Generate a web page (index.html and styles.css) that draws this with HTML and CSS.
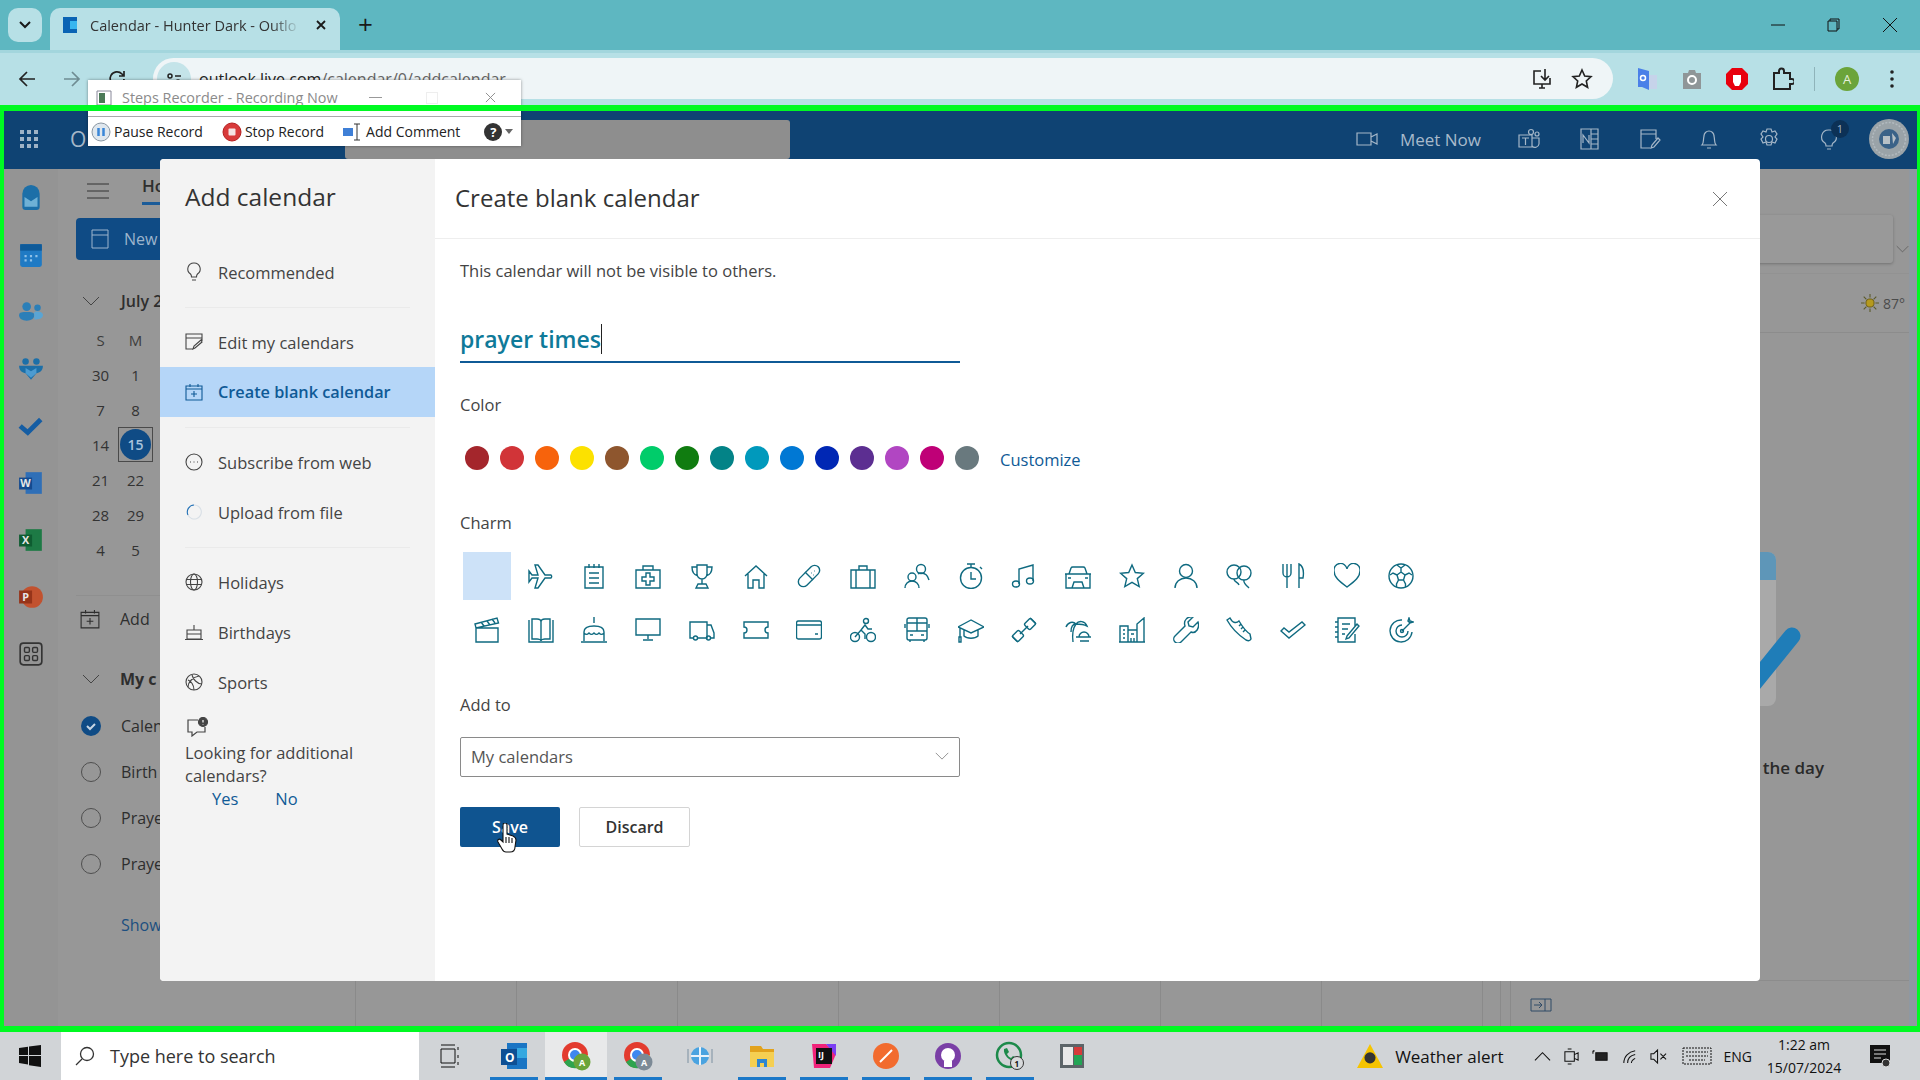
FILE: index.html
```html
<!DOCTYPE html>
<html lang="en">
<head>
    <meta charset="UTF-8">
    <title>Calendar - Hunter Dark - Outlook</title>
    <link rel="stylesheet" href="styles.css">
</head>
<body>

<!-- icon sprite -->
<svg class="sprite" xmlns="http://www.w3.org/2000/svg">
    <symbol id="c-plane" viewBox="0 0 26 26"><path d="M1 8l3 4h6L7 2h3l7 10h6a2 2 0 010 3h-6L10 25H7l3-10H4l-3 4z"/></symbol>
    <symbol id="c-notepad" viewBox="0 0 26 26"><path d="M4 4h18v21H4zM8 1v4M13 1v4M18 1v4M8 10h10M8 15h10M8 20h10"/></symbol>
    <symbol id="c-medkit" viewBox="0 0 26 26"><path d="M1 7h24v18H1zM8 7V3h10v4M11 10h4v4h4v4h-4v4h-4v-4H7v-4h4z"/></symbol>
    <symbol id="c-trophy" viewBox="0 0 26 26"><path d="M8 2h10v9a5 5 0 01-10 0zM8 4H3c0 5 2 8 6 9M18 4h5c0 5-2 8-6 9M13 16v5M9 21h8l2 4H7z"/></symbol>
    <symbol id="c-home" viewBox="0 0 26 26"><path d="M2 13L13 3l11 10M5 11v14h5v-8h6v8h5V11"/></symbol>
    <symbol id="c-pill" viewBox="0 0 26 26"><rect x="0" y="8" width="26" height="10" rx="5" transform="rotate(-45 13 13)"/><path d="M9 9l8 8M15 10h.5M18 8h.5M17 12h.5"/></symbol>
    <symbol id="c-case" viewBox="0 0 26 26"><path d="M1 7h24v18H1zM9 7V3h8v4M6 7v18M20 7v18"/></symbol>
    <symbol id="c-people" viewBox="0 0 26 26"><circle cx="17" cy="6" r="4.500"/><circle cx="8" cy="14" r="4"/><path d="M1 25c0-4 3-7 7-7s7 3 7 7M14 11c1-1 2-1 3-1 4 0 7 3 8 7"/></symbol>
    <symbol id="c-watch" viewBox="0 0 26 26"><circle cx="13" cy="15" r="10.500"/><path d="M9 1h8M13 1v3M13 9v7h5M22 4l2 2"/></symbol>
    <symbol id="c-music" viewBox="0 0 26 26"><path d="M8 21V6l14-4v16"/><ellipse cx="5" cy="21" rx="3.500" ry="3"/><ellipse cx="19" cy="18" rx="3.500" ry="3"/></symbol>
    <symbol id="c-car" viewBox="0 0 26 26"><path d="M4 11l2-6a2 2 0 012-1h10a2 2 0 012 1l2 6M0 11h26M1 11v14h24V11M7 25l2-6h8l2 6M3 15h3M20 15h3"/></symbol>
    <symbol id="c-star" viewBox="0 0 26 26"><path d="M13 2l3.300 7.500 8.200.7-6.200 5.400 1.900 8L13 19.400 5.800 23.600l1.900-8-6.200-5.400 8.200-.7z"/></symbol>
    <symbol id="c-person" viewBox="0 0 26 26"><circle cx="13" cy="8" r="6.500"/><path d="M2 25c0-6 5-10 11-10s11 4 11 10"/></symbol>
    <symbol id="c-balloon" viewBox="0 0 26 26"><circle cx="8" cy="9" r="7"/><circle cx="18" cy="10" r="7"/><path d="M8 16c0 3 4 3 5 6M18 17c-1 3 2 5 5 8"/></symbol>
    <symbol id="c-fork" viewBox="0 0 26 26"><path d="M3 1v9a4 4 0 004 4v11M7 1v13M11 1v9a4 4 0 01-4 4M19 25V1c4 2 5 8 4 14h-4"/></symbol>
    <symbol id="c-heart" viewBox="0 0 26 26"><path d="M13 24C5 18 0 14 0 8a6.500 6.500 0 0113-2 6.500 6.500 0 0113 2c0 6-5 10-13 16z"/></symbol>
    <symbol id="c-ball" viewBox="0 0 26 26"><circle cx="13" cy="13" r="12"/><path d="M13 9l4 3-1.500 5h-5L9 12zM13 9V5l-4-3M13 5l4-3M17 12l4-2 3 2M9 12l-4-2-3 2M15.500 17l2 4 0 3M10.500 17l-2 4 0 3"/></symbol>
    <symbol id="c-clapper" viewBox="0 0 26 26"><path d="M2 11h22v14H2zM1 7L23 1l1.500 5L2 11zM7 5l3 4M13 4l3 4M18 2l3 4"/></symbol>
    <symbol id="c-book" viewBox="0 0 26 26"><path d="M1 3v22h24V3M4 2h5c2 0 4 1 4 3v19c0-1-2-2-4-2H4zM22 2h-5c-2 0-4 1-4 3v19c0-1 2-2 4-2h5z"/></symbol>
    <symbol id="c-cake" viewBox="0 0 26 26"><path d="M13 0v6M3 24V15c0-4 4-6 10-6s10 2 10 6v9M3 16c2 2 3 2 5 0 2 2 3 2 5 0 2 2 3 2 5 0 2 2 3 2 5 0M0 25h26"/></symbol>
    <symbol id="c-screen" viewBox="0 0 26 26"><path d="M1 2h24v16H1zM13 18v4M8 23h10"/></symbol>
    <symbol id="c-truck" viewBox="0 0 26 26"><path d="M4 21H1V5h17v16H9M18 8h4l3 8v5h-3M18 21h-1"/><circle cx="6.500" cy="21" r="2"/><circle cx="19.500" cy="21" r="2"/></symbol>
    <symbol id="c-ticket" viewBox="0 0 26 26"><path d="M1 5h24v5a3 3 0 000 6v5H1v-5a3 3 0 000-6z"/></symbol>
    <symbol id="c-card" viewBox="0 0 26 26"><rect x="0.500" y="4" width="25" height="18" rx="2"/><path d="M1 8h24M19 17h3"/></symbol>
    <symbol id="c-bike" viewBox="0 0 26 26"><circle cx="5" cy="20" r="4.500"/><circle cx="21" cy="20" r="4.500"/><circle cx="16" cy="4" r="2.500"/><path d="M5 20l6-7 4 4v5M11 13l4-5 3 4h4"/></symbol>
    <symbol id="c-bus" viewBox="0 0 26 26"><rect x="3" y="1" width="20" height="22" rx="2"/><path d="M3 14h20M13 1v13M3 6h20M1 7v4M25 7v4M6 23v2M20 23v2M6 18h3M17 18h3"/></symbol>
    <symbol id="c-cap" viewBox="0 0 26 26"><path d="M13 3L0 10l13 6 13-6zM6 13v6c3 3 11 3 14 0v-6M2 11v9M1 20h2v5H1z"/></symbol>
    <symbol id="c-gym" viewBox="0 0 26 26"><path d="M9 17l8-8"/><rect x="-4" y="-4.500" width="8" height="9" rx="1.500" transform="translate(7 19) rotate(45)"/><rect x="-4" y="-4.500" width="8" height="9" rx="1.500" transform="translate(19 7) rotate(45)"/><path d="M1 19l6 6M19 1l6 6"/></symbol>
    <symbol id="c-beach" viewBox="0 0 26 26"><path d="M8 25c-1-8 0-14 3-18M1 10c2-5 7-6 10-3 3-4 9-3 11 2-4-2-8-2-11-2-3 0-5 3-5 8M14 20a5 5 0 0110 0M11 20h15M15 24h9"/></symbol>
    <symbol id="c-tower" viewBox="0 0 26 26"><path d="M1 25V9h8v16M9 13h9v12H9M18 25V7l7-6v24M0 25h26M4 13h2M4 17h2M4 21h2M12 17h3M12 21v4h3v-4"/></symbol>
    <symbol id="c-wrench" viewBox="0 0 26 26"><path d="M25 5l-5 5-4-1-1-4 5-5c-5-1-10 3-8 9L2 19a4 4 0 006 6l10-10c5 2 9-4 7-10z"/></symbol>
    <symbol id="c-shoe" viewBox="0 0 26 26"><path d="M1 3l3-2c3 6 7 5 9 3 3 5 6 10 11 13l1 5c-1 2-3 2-5 1C14 19 6 12 1 3zM15 7l-2 2M17 10l-2 2M19 13l-2 2"/></symbol>
    <symbol id="c-check" viewBox="0 0 26 26"><path d="M1 14l3-3 5 4L22 5l3 3-16 13z"/></symbol>
    <symbol id="c-notes" viewBox="0 0 26 26"><path d="M21 9V1H4v24h17V17M1 5h3M1 10h3M1 15h3M1 20h3M8 7h8M8 12h6M8 17h3M13 19l10-12 2 2-10 12-3 1z"/></symbol>
    <symbol id="c-target" viewBox="0 0 26 26"><path d="M14 3a11 11 0 1010 12M14 8a6 6 0 106 6"/><circle cx="14" cy="14" r="1.500"/><path d="M14 14L24 4M20 4l1-3 1 3 3 1-3 1-2-2z"/></symbol>

    <symbol id="i-bulb" viewBox="0 0 18 20"><path d="M9 1a6 6 0 00-3.500 11c1 1 1 2 1 3h5c0-1 0-2 1-3A6 6 0 009 1zM7 18h4"/></symbol>
    <symbol id="i-edit" viewBox="0 0 18 18"><path d="M17 8V1H1v15h7M1 5h16M8 16l1-3 7-6 1 2-7 6z"/></symbol>
    <symbol id="i-add" viewBox="0 0 18 18"><path d="M1 3h16v14H1zM1 6h16M5 1v3M13 1v3M9 8v6M6 11h6"/></symbol>
    <symbol id="i-sub" viewBox="0 0 18 18"><circle cx="9" cy="9" r="8"/><path d="M5 9h1M8.500 9h1M12 9h1"/></symbol>
    <symbol id="i-globe" viewBox="0 0 18 18"><circle cx="9" cy="9" r="8"/><ellipse cx="9" cy="9" rx="3.500" ry="8"/><path d="M1 6.500h16M1 11.500h16"/></symbol>
    <symbol id="i-cake" viewBox="0 0 18 18"><path d="M9 2v5M2 11V7h14v4M2 11v5h14v-5zM0 16.500h18"/></symbol>
    <symbol id="i-ball" viewBox="0 0 18 18"><circle cx="9" cy="9" r="8"/><path d="M3 14c0-5 5-10 11-11M7 2c1 4 5 9 10 9M3 7c3 1 6 5 6 10"/></symbol>
    <symbol id="i-chev" viewBox="0 0 18 10"><path d="M1 1l8 8 8-8"/></symbol>
    <symbol id="i-x" viewBox="0 0 16 16"><path d="M1 1l14 14M15 1L1 15"/></symbol>
</svg>

<div class="screen">

    <div class="tabstrip">
        <div class="tab-menu"><svg class="ic-sm" viewBox="0 0 12 8"><path d="M1 1l5 5 5-5"/></svg></div>
        <div class="tab">
            <svg class="favicon" viewBox="0 0 16 18"><path fill="#0a64b4" d="M1 1h14v16H1z"/><path fill="#38b6ef" d="M8 5h7v8H8z"/></svg>
            <span class="tab-title">Calendar - Hunter Dark - Outlo</span>
            <svg class="tab-close" viewBox="0 0 10 10"><path d="M1 1l8 8M9 1L1 9"/></svg>
        </div>
        <span class="tab-plus">+</span>
        <div class="win-controls">
            <svg viewBox="0 0 14 14"><path d="M0 7h14"/></svg>
            <svg viewBox="0 0 14 14"><path d="M1 3h9v10H1zM3 3V1h9v10h-2"/></svg>
            <svg viewBox="0 0 14 14"><path d="M0 0l14 14M14 0L0 14"/></svg>
        </div>
    </div>

    <div class="toolbar">
        <svg class="nav-btn" viewBox="0 0 18 18"><path d="M17 9H2M9 2L2 9l7 7"/></svg>
        <svg class="nav-btn dim" viewBox="0 0 18 18"><path d="M1 9h15M9 2l7 7-7 7"/></svg>
        <svg class="nav-btn" viewBox="0 0 18 18"><path d="M16 9a7 7 0 11-2-5l2 2M16 1v5h-5"/></svg>
        <div class="omnibox">
            <span class="site-chip"><svg viewBox="0 0 16 12"><circle cx="4" cy="3" r="2"/><path d="M9 3h6M1 9h6"/><circle cx="12" cy="9" r="2"/></svg></span>
            <span class="url"><b>outlook.live.com</b>/calendar/0/addcalendar</span>
            <svg class="omni-icon" viewBox="0 0 22 22"><path d="M10 3H3v13h16v-6M8 20h6M11 16v4M14 1v10M10 8l4 4 4-4"/></svg>
            <svg class="omni-icon" viewBox="0 0 22 22"><path d="M11 2l2.700 6 6.300.7-4.700 4.300 1.300 6.300L11 16l-5.600 3.300L6.700 13 2 8.700 8.300 8z"/></svg>
        </div>
        <div class="ext-icons">
            <svg viewBox="0 0 24 24"><path fill="#4a80e8" stroke="none" d="M3 1l11 3v19l-7-3-4 0z"/><path fill="#c6d3ea" stroke="none" d="M14 8h8v14h-8z"/><circle cx="8" cy="11" r="2.500" fill="none" stroke="#fff" stroke-width="1.500"/></svg>
            <svg viewBox="0 0 24 24"><path fill="#8f9698" stroke="none" d="M3 6h5l1-3h6l1 3h5v16H3z"/><circle cx="12" cy="13" r="4" fill="none" stroke="#fff" stroke-width="2"/></svg>
            <svg viewBox="0 0 24 24"><path fill="#e8000d" stroke="none" d="M7 1h10l6 6v10l-6 6H7l-6-6V7z"/><path fill="#fff" stroke="none" d="M8 8h8v7l-2 4h-4l-2-4z"/></svg>
            <svg viewBox="0 0 24 24"><path d="M4 6h5V4a2.500 2.500 0 015 0v2h6v6h2a2.500 2.500 0 010 5h-2v5H4z" stroke-width="2" fill="none"/></svg>
            <span class="ext-sep"></span>
            <span class="account">A</span>
            <svg viewBox="0 0 24 24"><circle cx="12" cy="5" r="1.800" fill="#222" stroke="none"/><circle cx="12" cy="12" r="1.800" fill="#222" stroke="none"/><circle cx="12" cy="19" r="1.800" fill="#222" stroke="none"/></svg>
        </div>
    </div>

    <!-- Steps Recorder floats over the browser -->
    <div class="recorder">
        <div class="rec-title">
            <svg viewBox="0 0 16 16"><path fill="#fff" stroke="#889" d="M1 1h14v14H1z"/><path fill="#4b7a57" stroke="none" d="M3 3h6v10H3z"/></svg>
            <span class="rec-name">Steps Recorder - Recording Now</span>
            <span class="rec-min"></span><span class="rec-max"></span>
            <svg class="rec-close" viewBox="0 0 12 12"><path d="M1 1l10 10M11 1L1 11"/></svg>
        </div>
        <div class="rec-bar">
            <span class="rec-btn"><svg viewBox="0 0 20 20"><circle cx="10" cy="10" r="9" fill="#dfe7ee" stroke="#8a97a3"/><path stroke="#3a86d8" stroke-width="2.500" d="M7.500 6v8M12.500 6v8"/></svg><span>Pause Record</span></span>
            <span class="rec-btn"><svg viewBox="0 0 20 20"><circle cx="10" cy="10" r="9" fill="#d83a3a" stroke="#b52020"/><rect x="6.500" y="6.500" width="7" height="7" rx="1" fill="#f5e4e4" stroke="none"/></svg><span>Stop Record</span></span>
            <span class="rec-btn"><svg viewBox="0 0 20 20"><path fill="#3f7fd6" stroke="none" d="M0 6h10v8H0z"/><path stroke="#333" fill="none" d="M14 2v16M11 2h6M11 18h6"/></svg><span>Add Comment</span></span>
            <span class="rec-help">?</span><span class="rec-caret"></span>
        </div>
    </div>

    <div class="capture">
        <header class="o-header">
            <svg class="waffle" viewBox="0 0 20 20"><g fill="#9fb3c6"><rect x="1" y="1" width="4" height="4"/><rect x="8" y="1" width="4" height="4"/><rect x="15" y="1" width="4" height="4"/><rect x="1" y="8" width="4" height="4"/><rect x="8" y="8" width="4" height="4"/><rect x="15" y="8" width="4" height="4"/><rect x="1" y="15" width="4" height="4"/><rect x="8" y="15" width="4" height="4"/><rect x="15" y="15" width="4" height="4"/></g></svg>
            <span class="o-brand">O</span>
            <div class="o-search"></div>
            <div class="o-actions">
                <svg class="o-meet" viewBox="0 0 22 16"><path d="M1 2h14v12H1zM15 6l6-3v10l-6-3"/></svg>
                <span class="o-meet-text">Meet Now</span>
                <svg viewBox="0 0 24 24"><circle cx="14" cy="5" r="2.500"/><circle cx="20" cy="7" r="2"/><path d="M2 8h13v12H2zM5 11h7M8.500 11v7M15 11h7v6a4 4 0 01-7 2"/></svg>
                <svg viewBox="0 0 24 24"><path d="M4 2h17v20H4zM14 2v20M14 7h7M14 12h7M14 17h7M6 16V8l6 8V8"/></svg>
                <svg viewBox="0 0 24 24"><path d="M19 12V3H4v18h9M4 7h15M14 21l1-3 6-7 2 2-6 7z"/></svg>
                <svg viewBox="0 0 24 24"><path d="M5 18c2-2 1-5 2-9a5 5 0 0110 0c1 4 0 7 2 9zM10 21h4"/></svg>
                <svg viewBox="0 0 24 24"><circle cx="12" cy="12" r="3.500"/><path d="M10 2h4l1 3 3-1 2 3-2 3 2 2-2 4-3-1-1 3h-4l-1-3-3 1-2-4 2-2-2-3 2-3 3 1z"/></svg>
                <span class="o-tips">
                    <svg viewBox="0 0 24 24"><path d="M12 3a7 7 0 00-4 13c1 1 1 2 1 3h6c0-1 0-2 1-3a7 7 0 00-4-13zM10 22h4"/></svg>
                    <span class="o-badge">1</span>
                </span>
                <span class="o-avatar"><svg viewBox="0 0 40 40"><circle cx="20" cy="20" r="20" fill="#9aa3a8" stroke="none"/><circle cx="20" cy="20" r="10" fill="#3a6288" stroke="none"/><path d="M14 17h7v8h-7zM23 14l4 5-3 6z" fill="#b7c0c6" stroke="none"/><circle cx="20" cy="20" r="16.500" fill="none" stroke="#b2babf" stroke-width="1.500" stroke-dasharray="2 1.500"/></svg></span>
            </div>
        </header>

        <div class="o-body">
            <nav class="rail">
                <span><svg viewBox="0 0 24 24"><path fill="#1c6fa8" stroke="none" d="M4 8a8 8 0 0116 0v12a3 3 0 01-3 3H7a3 3 0 01-3-3z"/><path fill="#6fb1d6" stroke="none" d="M6 11l6 4 6-4v9H6z"/></svg></span>
                <span><svg viewBox="0 0 24 24"><rect x="2" y="2" width="20" height="21" rx="2" fill="#1f7ac4" stroke="none"/><path fill="#0e5a99" stroke="none" d="M2 2h20v6H2z"/><path stroke="#8fc1e8" stroke-width="2" d="M6 13h2M11 13h2M16 13h2M6 17h2M11 17h2"/></svg></span>
                <span><svg viewBox="0 0 24 24"><g fill="#2b7fb8" stroke="none"><circle cx="8" cy="7" r="4"/><circle cx="18" cy="8" r="3"/><path d="M1 15c0-3 3-3 7-3s7 0 7 3-3 5-7 5-7-2-7-5z"/><path fill="#5aa5d4" d="M15 12c4-1 8 0 8 3s-4 4-8 4z"/></g></svg></span>
                <span><svg viewBox="0 0 24 24"><g fill="#1c6fa8" stroke="none"><circle cx="7" cy="5" r="3"/><circle cx="17" cy="5" r="3"/><path d="M1 9h22c0 5-3 6-6 7l-5 6-5-6c-3-1-6-2-6-7z"/><path fill="#4d9bd0" d="M7 11l5 3 5-3v5l-5 4-5-4z"/></g></svg></span>
                <span><svg viewBox="0 0 24 24"><path fill="none" stroke="#155da3" stroke-width="4.500" d="M2 12l7 6L21 6"/></svg></span>
                <span><svg viewBox="0 0 24 24"><path fill="#2f6fb7" stroke="none" d="M7 2h15v20H7z"/><path fill="#144a8f" stroke="none" d="M1 7h12v11H1z"/><text x="7" y="16" class="rail-letter">W</text></svg></span>
                <span><svg viewBox="0 0 24 24"><path fill="#1d7a45" stroke="none" d="M7 2h15v20H7z"/><path fill="#0e5c31" stroke="none" d="M1 7h12v11H1z"/><text x="7" y="16" class="rail-letter">X</text></svg></span>
                <span><svg viewBox="0 0 24 24"><circle cx="13" cy="12" r="10" fill="#c2522f" stroke="none"/><path fill="#96341a" stroke="none" d="M1 6h12v12H1z"/><text x="7" y="16" class="rail-letter">P</text></svg></span>
                <span><svg viewBox="0 0 24 24"><rect x="2" y="2" width="20" height="20" rx="3" fill="none" stroke="#333" stroke-width="1.500"/><g fill="none" stroke="#333" stroke-width="1.300"><rect x="6" y="6" width="4.500" height="4.500" rx="1"/><rect x="13.500" y="6" width="4.500" height="4.500" rx="1"/><rect x="6" y="13.500" width="4.500" height="4.500" rx="1"/><rect x="13.500" y="13.500" width="4.500" height="4.500" rx="1"/></g></svg></span>
            </nav>

            <aside class="side">
                <div class="ribbon">
                    <svg class="burger" viewBox="0 0 22 16"><path d="M0 1h22M0 8h22M0 15h22"/></svg>
                    <span class="ribbon-home">Ho</span>
                </div>
                <div class="new-btn">
                    <svg viewBox="0 0 18 20"><path d="M1 1h16v18H1zM1 6h16"/></svg>
                    <span>New</span>
                </div>
                <div class="month-row">
                    <svg class="chev-side"><use href="#i-chev"/></svg>
                    <b>July 2</b>
                </div>
                <div class="mini-cal">
                    <span class="wd">S</span><span class="wd">M</span>
                    <span>30</span><span>1</span>
                    <span>7</span><span>8</span>
                    <span>14</span><span class="today"><i>15</i></span>
                    <span>21</span><span>22</span>
                    <span>28</span><span>29</span>
                    <span>4</span><span>5</span>
                </div>
                <div class="side-row side-add">
                    <svg class="side-icon"><use href="#i-add"/></svg>
                    <span>Add</span>
                </div>
                <div class="side-row side-group">
                    <svg class="chev-side"><use href="#i-chev"/></svg>
                    <b>My c</b>
                </div>
                <div class="side-row"><span class="radio on"><svg viewBox="0 0 12 12"><path d="M2 6l3 3 5-5"/></svg></span><span>Calen</span></div>
                <div class="side-row"><span class="radio"></span><span>Birth</span></div>
                <div class="side-row"><span class="radio"></span><span>Praye</span></div>
                <div class="side-row"><span class="radio"></span><span>Praye</span></div>
                <div class="side-row side-show"><span class="side-link">Show</span></div>
            </aside>

            <main class="cal">
                <div class="cal-cmd">
                    <div class="cal-cmd-card"></div>
                    <svg class="cal-cmd-chev"><use href="#i-chev"/></svg>
                </div>
                <div class="cal-weather">
                    <svg viewBox="0 0 20 20"><g stroke="#5a5a2a" stroke-width="1.200"><path d="M10 0v4M10 16v4M0 10h4M16 10h4M3 3l3 3M14 14l3 3M17 3l-3 3M6 14l-3 3"/></g><circle cx="10" cy="10" r="4.500" fill="#b59a1e" stroke="#6a5a10"/></svg>
                    <span>87°</span>
                </div>
                <div class="cal-empty">
                    <svg class="cal-art" viewBox="0 0 60 155"><path fill="#a9a9a9" d="M0 0h27a8 8 0 018 8v138a8 8 0 01-8 8H0z"/><path fill="#5e96b8" d="M0 0h27a8 8 0 018 8v20H0z"/><path fill="none" stroke="#1f7db8" stroke-width="17" stroke-linecap="round" d="M51 84L4 142"/></svg>
                    <p>the day</p>
                </div>
                <div class="cal-foot">
                    <span></span><span></span><span></span><span></span><span></span><span></span><span></span><span></span><span></span>
                    <span class="foot-last"><svg viewBox="0 0 22 14"><path d="M1 1h20v12H1zM15 1v12M4 7h8M9 4l3 3-3 3"/></svg></span>
                </div>
            </main>
        </div>

        <!-- dialog sits over the dimmed calendar -->
        <section class="dialog">
            <div class="dlg-side">
                <h1 class="dlg-side-title">Add calendar</h1>
                <a class="dlg-item"><svg><use href="#i-bulb"/></svg>Recommended</a>
                <hr>
                <a class="dlg-item"><svg><use href="#i-edit"/></svg>Edit my calendars</a>
                <a class="dlg-item active"><svg><use href="#i-add"/></svg>Create blank calendar</a>
                <hr>
                <a class="dlg-item"><svg><use href="#i-sub"/></svg>Subscribe from web</a>
                <a class="dlg-item"><svg class="spin" viewBox="0 0 18 18"><path d="M9 2a7 7 0 00-6 10"/><path class="spin-pale" d="M9 2a7 7 0 11-6 10"/></svg>Upload from file</a>
                <hr>
                <a class="dlg-item"><svg><use href="#i-globe"/></svg>Holidays</a>
                <a class="dlg-item"><svg><use href="#i-cake"/></svg>Birthdays</a>
                <a class="dlg-item"><svg><use href="#i-ball"/></svg>Sports</a>
                <div class="dlg-ask">
                    <svg viewBox="0 0 22 20"><path d="M12 3H2v12h4v4l5-4h8v-5"/><circle cx="17" cy="5" r="4.500" fill="#444"/><path d="M17 3v2.500M17 7v.500" stroke="#fff"/></svg>
                    <p>Looking for additional calendars?</p>
                    <div class="dlg-ask-links"><a>Yes</a><a>No</a></div>
                </div>
            </div>

            <div class="dlg-main">
                <div class="dlg-head">
                    <h2>Create blank calendar</h2>
                    <svg class="dlg-close"><use href="#i-x"/></svg>
                </div>
                <div class="dlg-form">
                    <p class="note">This calendar will not be visible to others.</p>
                    <div class="name-input">prayer times<span class="caret"></span></div>

                    <div class="field-label color-label">Color</div>
                    <div class="colors">
                        <span class="dot" style="background:#a4262c"></span>
                        <span class="dot" style="background:#d13438"></span>
                        <span class="dot" style="background:#f7630c"></span>
                        <span class="dot" style="background:#fce100"></span>
                        <span class="dot" style="background:#8e562e"></span>
                        <span class="dot" style="background:#00cc6a"></span>
                        <span class="dot" style="background:#107c10"></span>
                        <span class="dot" style="background:#038387"></span>
                        <span class="dot" style="background:#0099bc"></span>
                        <span class="dot" style="background:#0078d4"></span>
                        <span class="dot" style="background:#0027b4"></span>
                        <span class="dot" style="background:#5c2e91"></span>
                        <span class="dot" style="background:#b146c2"></span>
                        <span class="dot" style="background:#bf0077"></span>
                        <span class="dot" style="background:#69797e"></span>
                        <a class="customize">Customize</a>
                    </div>

                    <div class="field-label charm-label">Charm</div>
                    <div class="charms">
                        <span class="charm selected"></span>
                        <span class="charm"><svg><use href="#c-plane"/></svg></span>
                        <span class="charm"><svg><use href="#c-notepad"/></svg></span>
                        <span class="charm"><svg><use href="#c-medkit"/></svg></span>
                        <span class="charm"><svg><use href="#c-trophy"/></svg></span>
                        <span class="charm"><svg><use href="#c-home"/></svg></span>
                        <span class="charm"><svg><use href="#c-pill"/></svg></span>
                        <span class="charm"><svg><use href="#c-case"/></svg></span>
                        <span class="charm"><svg><use href="#c-people"/></svg></span>
                        <span class="charm"><svg><use href="#c-watch"/></svg></span>
                        <span class="charm"><svg><use href="#c-music"/></svg></span>
                        <span class="charm"><svg><use href="#c-car"/></svg></span>
                        <span class="charm"><svg><use href="#c-star"/></svg></span>
                        <span class="charm"><svg><use href="#c-person"/></svg></span>
                        <span class="charm"><svg><use href="#c-balloon"/></svg></span>
                        <span class="charm"><svg><use href="#c-fork"/></svg></span>
                        <span class="charm"><svg><use href="#c-heart"/></svg></span>
                        <span class="charm"><svg><use href="#c-ball"/></svg></span>
                        <span class="charm"><svg><use href="#c-clapper"/></svg></span>
                        <span class="charm"><svg><use href="#c-book"/></svg></span>
                        <span class="charm"><svg><use href="#c-cake"/></svg></span>
                        <span class="charm"><svg><use href="#c-screen"/></svg></span>
                        <span class="charm"><svg><use href="#c-truck"/></svg></span>
                        <span class="charm"><svg><use href="#c-ticket"/></svg></span>
                        <span class="charm"><svg><use href="#c-card"/></svg></span>
                        <span class="charm"><svg><use href="#c-bike"/></svg></span>
                        <span class="charm"><svg><use href="#c-bus"/></svg></span>
                        <span class="charm"><svg><use href="#c-cap"/></svg></span>
                        <span class="charm"><svg><use href="#c-gym"/></svg></span>
                        <span class="charm"><svg><use href="#c-beach"/></svg></span>
                        <span class="charm"><svg><use href="#c-tower"/></svg></span>
                        <span class="charm"><svg><use href="#c-wrench"/></svg></span>
                        <span class="charm"><svg><use href="#c-shoe"/></svg></span>
                        <span class="charm"><svg><use href="#c-check"/></svg></span>
                        <span class="charm"><svg><use href="#c-notes"/></svg></span>
                        <span class="charm"><svg><use href="#c-target"/></svg></span>
                    </div>

                    <div class="field-label addto-label">Add to</div>
                    <div class="select-box">
                        <span>My calendars</span>
                        <svg><use href="#i-chev"/></svg>
                    </div>

                    <div class="actions">
                        <button class="btn-save">Save</button>
                        <button class="btn-discard">Discard</button>
                    </div>
                </div>
            </div>

            <svg class="hand" viewBox="0 0 20 30"><path d="M6 2a2 2 0 014 0v9l6 2c2 1 3 2 3 4l-1 7c0 3-2 5-5 5H9c-2 0-3-1-4-3l-4-7c-1-2 1-4 3-2l2 2z"/><path d="M9 14v6M12 14v6M15 15v5"/></svg>
        </section>
    </div>

    <footer class="taskbar">
        <svg class="tb-start" viewBox="0 0 22 22"><path fill="#111" d="M0 3l9-1.300V10H0zM10 1.500L22 0v10H10zM0 11h9v8.500L0 18zM10 11h12v11l-12-1.700z"/></svg>
        <div class="tb-search">
            <svg viewBox="0 0 20 20"><circle cx="12" cy="8" r="6.500"/><path d="M7 13l-6 6"/></svg>
            <span>Type here to search</span>
        </div>
        <svg class="tb-taskview" viewBox="0 0 22 24"><path d="M1 5h14v14H1zM1 1h14M1 23h14M18 3v3M18 11v3M18 18v3"/></svg>
        <div class="tb-apps">
            <span class="run"><svg viewBox="0 0 30 30"><path fill="#1a75c4" d="M8 2h20v26H8z"/><path fill="#35a8e0" d="M18 7h10v10H18z"/><path fill="#0d4f94" d="M2 8h16v16H2z"/><text x="6" y="21" class="tb-letter">O</text></svg></span>
            <span class="run active"><svg viewBox="0 0 30 30"><circle cx="14" cy="14" r="13" fill="#e33b2e"/><path fill="#2da44e" d="M14 14L3 21a13 13 0 0013 6z"/><path fill="#f6c026" d="M14 14h13a13 13 0 01-10 12z"/><circle cx="14" cy="14" r="6" fill="#3f87f0" stroke="#fff" stroke-width="2"/><circle cx="21" cy="21" r="8.500" fill="#6ba43a"/><text x="18" y="25" class="tb-letter small">A</text></svg></span>
            <span class="run"><svg viewBox="0 0 30 30"><circle cx="14" cy="14" r="13" fill="#e33b2e"/><path fill="#2da44e" d="M14 14L3 21a13 13 0 0013 6z"/><path fill="#f6c026" d="M14 14h13a13 13 0 01-10 12z"/><circle cx="14" cy="14" r="6" fill="#3f87f0" stroke="#fff" stroke-width="2"/><circle cx="21" cy="21" r="8.500" fill="#7c8a96"/><text x="18" y="25" class="tb-letter small">A</text></svg></span>
            <span><svg viewBox="0 0 30 30"><circle cx="15" cy="15" r="9" fill="#4aa3e0"/><path stroke="#e8f2fa" stroke-width="2" d="M15 6v18M6 15h18"/><path stroke="#a6b2bc" stroke-width="2" fill="none" d="M3 8v14M27 8v14"/></svg></span>
            <span class="run"><svg viewBox="0 0 30 30"><path fill="#e2a21c" d="M3 5h11l2 3h11v5H3z"/><path fill="#f5cf52" d="M3 11h24v15H3z"/><path fill="#2e86d1" d="M10 18h10v8h-3v-4h-4v4h-3z"/></svg></span>
            <span class="run"><svg viewBox="0 0 30 30"><path fill="#f0237a" d="M3 3h14l10 10-6 14H5z"/><path fill="#7b3ff2" d="M17 3h10v12z"/><path fill="#111" d="M7 7h16v16H7z"/><text x="9" y="17" class="tb-letter small">IJ</text></svg></span>
            <span class="run"><svg viewBox="0 0 30 30"><circle cx="15" cy="15" r="13" fill="#f26b2e"/><path stroke="#fff" stroke-width="2" d="M9 21L21 9"/></svg></span>
            <span class="run"><svg viewBox="0 0 30 30"><circle cx="15" cy="15" r="13" fill="#7a3fa6"/><circle cx="15" cy="14" r="7" fill="#fff"/><path fill="#fff" d="M11 20h8v6h-8z"/></svg></span>
            <span class="run"><svg viewBox="0 0 30 30"><circle cx="14" cy="14" r="12" fill="none" stroke="#1c8a4a" stroke-width="2.500"/><path fill="#1c8a4a" d="M9 8l3-1 2 4-2 2c1 2 2 3 4 4l2-2 4 2-1 3c-6 1-13-6-12-12z"/><circle cx="22" cy="22" r="6.500" fill="#d8dadc" stroke="#333"/><text x="19.500" y="25.500" class="tb-letter tiny">1</text></svg></span>
            <span><svg viewBox="0 0 30 30"><rect x="3" y="3" width="24" height="24" fill="#5c6468"/><rect x="6" y="6" width="10" height="18" fill="#e8e8e8"/><rect x="17" y="6" width="8" height="18" fill="#d63a3a"/><rect x="17" y="14" width="8" height="10" fill="#23a455"/></svg></span>
        </div>
        <div class="tb-tray">
            <svg class="tb-alert" viewBox="0 0 28 26"><path fill="#f6c400" d="M14 0l14 26H0z"/><circle cx="14" cy="15" r="6" fill="#333"/></svg>
            <span class="tb-weather">Weather alert</span>
            <svg class="tray-i" viewBox="0 0 18 18"><path d="M1 13l8-8 8 8"/></svg>
            <svg class="tray-i" viewBox="0 0 18 18"><path d="M2 4h10v10H2zM12 7l4-2v8l-4-2M5 1h4M5 17h4"/></svg>
            <svg class="tray-i" viewBox="0 0 18 18"><path fill="#222" d="M4 5h12v8H4z"/><path d="M1 3v3M2 2v2"/></svg>
            <svg class="tray-i" viewBox="0 0 18 18"><path d="M3 16C3 9 8 4 15 3M7 16c0-5 3-8 8-9M11 16c0-2 2-4 4-5"/></svg>
            <svg class="tray-i" viewBox="0 0 18 18"><path d="M1 6h3l4-4v14l-4-4H1zM11 6l6 6M17 6l-6 6"/></svg>
            <svg class="tray-kb" viewBox="0 0 30 20"><path d="M1 2h28v16H1zM4 6h22M4 10h22M7 14h16" stroke-dasharray="2 1"/></svg>
            <span class="tb-lang">ENG</span>
            <div class="tb-clock"><span>1:22 am</span><span>15/07/2024</span></div>
            <svg class="tb-notify" viewBox="0 0 22 24"><path fill="#111" d="M1 1h20v18H1z"/><path stroke="#ddd" d="M5 6h12M5 10h12M5 14h7"/><circle cx="17" cy="19" r="4" fill="#333" stroke="#ddd"/></svg>
        </div>
    </footer>
</div>

</body>
</html>
```

FILE: styles.css
```css
* {
    box-sizing: border-box;
}
html, body {
    margin: 0;
    height: 100%;
    overflow: hidden;
}
body {
    font-family: "Open Sans", "Noto Sans", sans-serif;
    color: #333;
}
svg {
    display: block;
    fill: none;
    stroke: currentColor;
}
.sprite {
    position: absolute;
    width: 0;
    height: 0;
}
.screen {
    position: relative;
    display: flex;
    flex-direction: column;
    width: 1920px;
    height: 1080px;
}

/* browser tab strip */
.tabstrip {
    display: flex;
    align-items: flex-end;
    height: 50px;
    padding-left: 8px;
    background-color: #5eb7c1;
}
.tab-menu {
    display: flex;
    align-items: center;
    justify-content: center;
    align-self: flex-start;
    width: 34px;
    height: 34px;
    margin-top: 8px;
    border-radius: 10px;
    background-color: #b7e0e6;
    color: #1a1a1a;
}
.ic-sm {
    width: 12px;
    height: 8px;
    stroke-width: 2;
}
.tab {
    display: flex;
    align-items: center;
    width: 290px;
    height: 42px;
    margin-left: 8px;
    padding: 0 14px 8px 12px;
    border-radius: 10px 10px 0 0;
    background-color: #b7e0e6;
}
.favicon {
    width: 16px;
    height: 18px;
    stroke: none;
    flex: none;
}
.tab-title {
    flex: 1;
    margin-left: 12px;
    font-size: 14.500px;
    color: #333;
    white-space: nowrap;
    -webkit-mask-image: linear-gradient(to right, #000 85%, transparent 98%);
    mask-image: linear-gradient(to right, #000 85%, transparent 98%);
}
.tab-close {
    width: 10px;
    height: 10px;
    stroke-width: 1.800;
    color: #1a1a1a;
    margin-left: 12px;
    flex: none;
}
.tab-plus {
    align-self: flex-start;
    margin: 6px 0 0 18px;
    font-size: 26px;
    line-height: 36px;
    color: #1a1a1a;
}
.win-controls {
    display: flex;
    align-self: flex-start;
    gap: 42px;
    margin: 18px 23px 0 auto;
    color: #111;
}
.win-controls svg {
    width: 14px;
    height: 14px;
}

/* browser toolbar */
.toolbar {
    display: flex;
    align-items: center;
    height: 55px;
    padding: 0 16px 1px 18px;
    background-color: #b7e0e6;
    border-top: 3px solid #a3d6dd;
}
.nav-btn {
    width: 18px;
    height: 18px;
    margin-right: 27px;
    stroke-width: 1.700;
    color: #222;
    flex: none;
}
.nav-btn.dim {
    color: #6f8c92;
}
.omnibox {
    display: flex;
    align-items: center;
    width: 1460px;
    height: 41px;
    margin-left: 0;
    padding-right: 20px;
    border-radius: 21px;
    background-color: #eff5f7;
}
.site-chip {
    display: flex;
    align-items: center;
    justify-content: center;
    width: 34px;
    height: 34px;
    margin-left: 4px;
    border-radius: 50%;
    background-color: #c4e4e9;
    color: #222;
}
.site-chip svg {
    width: 16px;
    height: 12px;
    stroke-width: 1.500;
}
.url {
    flex: 1;
    margin-left: 8px;
    font-size: 16px;
    color: #666;
}
.url b {
    font-weight: 400;
    color: #222;
}
.omni-icon {
    width: 22px;
    height: 22px;
    margin-left: 18px;
    stroke-width: 1.600;
    color: #222;
}
.ext-icons {
    display: flex;
    align-items: center;
    margin-left: 22px;
    gap: 21px;
    color: #222;
}
.ext-icons svg {
    width: 24px;
    height: 24px;
}
.ext-sep {
    width: 1px;
    height: 24px;
    margin: 0 -1px;
    background-color: #8fb4ba;
}
.account {
    width: 24px;
    height: 24px;
    border-radius: 50%;
    background-color: #6ba43a;
    color: #e6f0dc;
    font-size: 13px;
    line-height: 24px;
    text-align: center;
}

/* steps recorder window */
.recorder {
    position: absolute;
    left: 88px;
    top: 80px;
    z-index: 2;
    width: 433px;
    height: 66px;
    background-color: #fff;
    box-shadow: 0 0 3px rgba(0, 0, 0, .4);
}
.rec-title {
    display: flex;
    align-items: center;
    height: 37px;
    padding: 0 0 1px 8px;
    border-bottom: 1px solid #aaa;
}
.rec-title svg {
    width: 16px;
    height: 16px;
    flex: none;
}
.rec-name {
    margin-left: 10px;
    font-size: 14.400px;
    color: #8b8b8b;
    white-space: nowrap;
}
.rec-min {
    width: 13px;
    height: 1px;
    margin-left: 31px;
    background-color: #999;
}
.rec-max {
    width: 12px;
    height: 12px;
    margin-left: 44px;
    border: 1px solid #eee;
}
.rec-title .rec-close {
    width: 11px;
    height: 11px;
    margin-left: 47px;
    color: #888;
}
.rec-bar {
    display: flex;
    align-items: center;
    height: 29px;
    padding-left: 3px;
    font-size: 14px;
    color: #222;
}
.rec-btn {
    display: flex;
    align-items: center;
    gap: 3px;
    margin-right: 19px;
    white-space: nowrap;
}
.rec-btn svg {
    width: 20px;
    height: 20px;
}
.rec-help {
    width: 18px;
    height: 18px;
    margin-left: 5px;
    border-radius: 50%;
    background-color: #333;
    color: #fff;
    font-size: 13px;
    font-weight: 700;
    line-height: 18px;
    text-align: center;
}
.rec-caret {
    width: 0;
    height: 0;
    margin-left: 3px;
    border: 4px solid transparent;
    border-top: 5px solid #666;
    border-bottom: 0;
}

/* captured area with the green frame */
.capture {
    position: relative;
    display: flex;
    flex-direction: column;
    flex: 1;
    min-height: 0;
    padding: 6px 3px 6px 4px;
    background-color: #979797;
}
.capture::after {
    content: "";
    position: absolute;
    inset: 0;
    z-index: 3;
    border: solid #00fa22;
    border-width: 6px 3px 6px 4px;
    pointer-events: none;
}

/* outlook header */
.o-header {
    display: flex;
    align-items: center;
    height: 58px;
    padding: 0 0 2px 15px;
    background-color: #0f4373;
    color: #a5b7c8;
    flex: none;
}
.waffle {
    width: 20px;
    height: 20px;
    stroke: none;
}
.o-brand {
    margin-left: 31px;
    font-size: 21px;
    width: 275px;
}
.o-search {
    width: 445px;
    height: 39px;
    border-radius: 3px;
    background-color: #8e8e8e;
}
.o-actions {
    display: flex;
    align-items: center;
    margin-left: auto;
    gap: 36px;
    padding-right: 8px;
}
.o-actions svg {
    width: 24px;
    height: 24px;
    stroke-width: 1.200;
}
.o-actions .o-meet {
    width: 22px;
    height: 16px;
    margin-right: -14px;
}
.o-meet-text {
    font-size: 17px;
    color: #a8bacb;
}
.o-tips {
    position: relative;
}
.o-badge {
    position: absolute;
    right: -8px;
    top: -7px;
    width: 18px;
    height: 18px;
    border-radius: 50%;
    background-color: #0c3156;
    font-size: 11px;
    line-height: 18px;
    text-align: center;
}
.o-avatar {
    margin-left: -8px;
}
.o-actions .o-avatar svg {
    width: 40px;
    height: 40px;
}

.o-body {
    display: flex;
    flex: 1;
    min-height: 0;
}

/* app rail */
.rail {
    display: flex;
    flex-direction: column;
    width: 54px;
    flex: none;
    background-color: #949494;
}
.rail span {
    display: flex;
    align-items: center;
    justify-content: center;
    height: 57px;
}
.rail svg {
    width: 26px;
    height: 26px;
    stroke: none;
}
.rail-letter {
    font-size: 10px;
    font-weight: 700;
    fill: #e6e6e6;
    text-anchor: middle;
}

/* sidebar behind the dialog */
.side {
    display: flex;
    flex-direction: column;
    width: 297px;
    padding-left: 18px;
    flex: none;
    font-size: 16px;
    color: #2e2e2e;
    background-color: #979797;
}
.ribbon {
    display: flex;
    align-items: center;
    height: 40px;
}
.burger {
    width: 22px;
    height: 16px;
    margin: 4px 0 0 11px;
    color: #333;
}
.ribbon-home {
    margin-left: 33px;
    padding-bottom: 5px;
    border-bottom: 3px solid #1c5c99;
    font-weight: 600;
    font-size: 17px;
}
.new-btn {
    display: flex;
    align-items: center;
    gap: 15px;
    width: 200px;
    height: 42px;
    margin-top: 9px;
    padding-left: 15px;
    border-radius: 4px;
    background-color: #0f4b85;
    color: #9db5cd;
}
.new-btn svg {
    width: 18px;
    height: 20px;
    flex: none;
}
.month-row {
    display: flex;
    align-items: center;
    gap: 21px;
    height: 35px;
    margin-top: 23px;
    padding-left: 6px;
}
.month-row b {
    font-weight: 600;
}
.chev-side {
    width: 18px;
    height: 10px;
    flex: none;
    color: #444;
}
.mini-cal {
    display: grid;
    grid-template-columns: 35px 35px;
    grid-auto-rows: 35px;
    margin: 4px 0 0 7px;
    font-size: 15px;
    color: #333;
}
.mini-cal span {
    display: flex;
    align-items: center;
    justify-content: center;
}
.mini-cal .wd {
    color: #3d3d3d;
}
.mini-cal .today {
    border: 1px solid #4a4a4a;
}
.mini-cal .today i {
    width: 31px;
    height: 31px;
    border-radius: 50%;
    background-color: #0f4b85;
    color: #a9c3dc;
    font-style: normal;
    font-weight: 600;
    font-size: 14px;
    line-height: 31px;
    text-align: center;
}
.side-row {
    display: flex;
    align-items: center;
    gap: 20px;
    height: 46px;
    padding-left: 5px;
    white-space: nowrap;
}
.side-add {
    margin-top: 28px;
    padding-left: 4px;
    border-top: 1px solid #8f8f8f;
}
.side-icon {
    width: 20px;
    height: 20px;
    flex: none;
}
.side-group {
    margin: 15px 0 1px;
    padding-left: 6px;
}
.side-group b {
    font-weight: 700;
}
.radio {
    display: flex;
    align-items: center;
    justify-content: center;
    width: 20px;
    height: 20px;
    border: 1px solid #4f4f4f;
    border-radius: 50%;
    flex: none;
}
.radio.on {
    border: 0;
    background-color: #0f4b85;
    color: #c5d5e4;
}
.radio svg {
    width: 12px;
    height: 12px;
    stroke-width: 2;
}
.side-show {
    margin-top: 15px;
    padding-left: 45px;
}
.side-link {
    color: #1c4f80;
}

/* calendar behind the dialog */
.cal {
    display: flex;
    flex-direction: column;
    flex: 1;
    min-width: 0;
    border-right: 8px solid #8f98a1;
}
.cal-cmd {
    display: flex;
    align-items: center;
    height: 48px;
    margin-top: 46px;
    flex: none;
}
.cal-cmd-card {
    flex: 1;
    height: 48px;
    margin-right: 3px;
    border-radius: 3px;
    background-color: #999;
    box-shadow: 0 1px 3px rgba(0, 0, 0, .25);
}
.cal-cmd-chev {
    width: 13px;
    height: 8px;
    margin: 20px 0 0;
    color: #555;
}
.cal-weather {
    display: flex;
    align-items: center;
    justify-content: flex-end;
    gap: 4px;
    height: 60px;
    margin-top: 10px;
    padding-right: 4px;
    border-top: 1px solid #929292;
    border-bottom: 1px solid #8c8c8c;
    font-size: 14px;
    color: #4b4b4b;
    flex: none;
}
.cal-weather svg {
    width: 18px;
    height: 18px;
    stroke: none;
}
.cal-empty {
    display: flex;
    flex-direction: column;
    align-items: flex-end;
    flex: 1;
    padding: 219px 85px 0 0;
}
.cal-art {
    width: 60px;
    height: 155px;
    margin-right: 23px;
    stroke: none;
}
.cal-empty p {
    margin: 49px 0 0;
    font-size: 17px;
    font-weight: 600;
    color: #2a2a2a;
}
.cal-foot {
    display: grid;
    grid-template-columns: repeat(7, 161px) 18px 10px 1fr;
    height: 46px;
    flex: none;
    border-top: 1px solid #8c8c8c;
    margin-top: auto;
}
.cal-foot span {
    border-left: 1px solid #8a8a8a;
}
.cal-foot .foot-last {
    padding: 17px 0 0 19px;
}
.foot-last svg {
    width: 22px;
    height: 14px;
    color: #2f4a66;
}

/* dialog */
.dialog {
    position: absolute;
    left: 160px;
    top: 54px;
    z-index: 1;
    display: flex;
    width: 1600px;
    height: 822px;
    border-radius: 4px;
    background-color: #fff;
    overflow: hidden;
}
.dlg-side {
    width: 275px;
    flex: none;
    background-color: #f3f3f3;
    font-size: 16.500px;
    color: #444;
}
.dlg-side-title {
    height: 88px;
    margin: 0;
    padding: 18px 0 0 25px;
    font-size: 24.500px;
    font-weight: 400;
    line-height: 40px;
    color: #333;
}
.dlg-side hr {
    height: 1px;
    margin: 10px 25px 9px;
    border: 0;
    background-color: #eaeaea;
}
.dlg-item {
    display: flex;
    align-items: center;
    gap: 15px;
    height: 50px;
    padding-left: 25px;
}
.dlg-item svg {
    width: 18px;
    height: 20px;
    flex: none;
    color: #444;
    stroke-width: 1.100;
}
.dlg-item.active {
    background-color: #b5d6f8;
    color: #0f5a96;
    font-weight: 600;
    font-size: 16.300px;
}
.dlg-item.active svg {
    color: #0f5a96;
}
.spin {
    color: #1f6fb5 !important;
}
.spin-pale {
    stroke: #d8dfe6;
}
.dlg-ask {
    margin-top: 10px;
    padding-left: 25px;
}
.dlg-ask svg {
    width: 22px;
    height: 20px;
    margin-left: 1px;
    stroke-width: 1.200;
    color: #444;
}
.dlg-ask p {
    width: 200px;
    margin: 4px 0 0;
    line-height: 23px;
}
.dlg-ask-links {
    display: flex;
    gap: 37px;
    padding-left: 27px;
    line-height: 23px;
    color: #0f5a96;
}
.dlg-main {
    display: flex;
    flex-direction: column;
    flex: 1;
    min-width: 0;
}
.dlg-head {
    display: flex;
    align-items: center;
    justify-content: space-between;
    height: 80px;
    flex: none;
    padding: 0 32px 0 20px;
    border-bottom: 1px solid #eee;
}
.dlg-head h2 {
    margin: 0 0 2px;
    font-size: 24px;
    font-weight: 400;
    color: #333;
}
.dlg-close {
    width: 16px;
    height: 16px;
    color: #777;
}
.dlg-form {
    padding: 20px 25px 0;
}
.note {
    height: 24px;
    margin: 0;
    font-size: 16.500px;
    line-height: 24px;
    color: #444;
}
.name-input {
    display: flex;
    align-items: center;
    width: 500px;
    height: 44px;
    margin-top: 36px;
    padding-bottom: 2px;
    border-bottom: 2px solid #0f5a96;
    font-size: 23px;
    font-weight: 600;
    color: #0f7a99;
}
.caret {
    width: 1px;
    height: 30px;
    background-color: #222;
}
.field-label {
    height: 24px;
    font-size: 16.500px;
    font-weight: 500;
    line-height: 24px;
    color: #444;
}
.color-label {
    margin-top: 30px;
}
.colors {
    display: flex;
    align-items: center;
    gap: 11px;
    height: 24px;
    margin: 29px 0 0 5px;
}
.dot {
    width: 24px;
    height: 24px;
    border-radius: 50%;
    flex: none;
}
.customize {
    margin: 2px 0 0 10px;
    font-size: 16.500px;
    color: #0f5a96;
}
.charm-label {
    margin-top: 41px;
}
.charms {
    display: grid;
    grid-template-columns: repeat(18, 53.760px);
    grid-auto-rows: 54px;
    margin-top: 14px;
}
.charm {
    display: flex;
    align-items: center;
    justify-content: center;
    color: #0f6a80;
}
.charm svg {
    width: 26px;
    height: 26px;
    stroke-width: 1.400;
}
.charm.selected::before {
    content: "";
    width: 48px;
    height: 48px;
    background-color: #cde2f8;
}
.addto-label {
    margin-top: 36px;
}
.select-box {
    display: flex;
    align-items: center;
    justify-content: space-between;
    width: 500px;
    height: 40px;
    margin-top: 20px;
    padding: 0 10px 2px;
    border: 1px solid #8a8a8a;
    border-radius: 2px;
    font-size: 16.500px;
    color: #555;
}
.select-box svg {
    width: 14px;
    height: 8px;
    color: #777;
}
.actions {
    display: flex;
    gap: 19px;
    margin-top: 30px;
}
.actions button {
    height: 40px;
    border-radius: 2px;
    font-family: inherit;
    font-size: 16px;
    font-weight: 600;
}
.btn-save {
    width: 100px;
    border: 0;
    background-color: #0f5490;
    color: #fff;
}
.btn-discard {
    width: 111px;
    border: 1px solid #d4d4d4;
    background-color: #fff;
    color: #333;
}
.hand {
    position: absolute;
    left: 337px;
    top: 664px;
    width: 20px;
    height: 30px;
    fill: #fff;
    stroke: #111;
    stroke-width: 1.100;
}

/* windows taskbar */
.taskbar {
    display: flex;
    align-items: center;
    height: 48px;
    flex: none;
    background-color: #d1d4d7;
    color: #111;
}
.tb-start {
    width: 22px;
    height: 22px;
    margin-left: 19px;
    stroke: none;
    flex: none;
}
.tb-search {
    display: flex;
    align-items: center;
    width: 358px;
    height: 48px;
    margin-left: 20px;
    padding-left: 14px;
    background-color: #fff;
    font-size: 18px;
    color: #333;
}
.tb-search svg {
    width: 20px;
    height: 20px;
    margin-right: 15px;
    stroke-width: 1.300;
}
.tb-taskview {
    width: 22px;
    height: 24px;
    margin-left: 21px;
    flex: none;
}
.tb-apps {
    display: flex;
    margin-left: 21px;
}
.tb-apps span {
    display: flex;
    align-items: center;
    justify-content: center;
    width: 62px;
    height: 48px;
}
.tb-apps .run {
    background: linear-gradient(#1b78c8, #1b78c8) center bottom / 48px 3px no-repeat;
}
.tb-apps .active {
    background: linear-gradient(#1b78c8, #1b78c8) center bottom / 100% 3px no-repeat, #e8e9ea;
}
.tb-apps svg {
    width: 30px;
    height: 30px;
    stroke: none;
}
.tb-letter {
    font-size: 12px;
    font-weight: 700;
    fill: #fff;
}
.tb-letter.small {
    font-size: 9px;
}
.tb-letter.tiny {
    font-size: 8px;
    fill: #111;
}
.tb-tray {
    display: flex;
    align-items: center;
    margin-left: auto;
    padding-right: 29px;
}
.tb-alert {
    width: 26px;
    height: 26px;
    stroke: none;
}
.tb-weather {
    margin: 0 30px 0 12px;
    font-size: 17px;
    white-space: nowrap;
}
.tray-i {
    width: 17px;
    height: 17px;
    margin-right: 12px;
    stroke-width: 1.100;
}
.tray-kb {
    width: 30px;
    height: 20px;
    margin-left: 3px;
    stroke-width: 1;
}
.tb-lang {
    margin-left: 12px;
    font-size: 14px;
}
.tb-clock {
    display: flex;
    flex-direction: column;
    align-items: center;
    width: 90px;
    margin-left: 7px;
    font-size: 14px;
    line-height: 23px;
}
.tb-notify {
    width: 22px;
    height: 24px;
    margin-left: 20px;
    stroke: none;
}
```
